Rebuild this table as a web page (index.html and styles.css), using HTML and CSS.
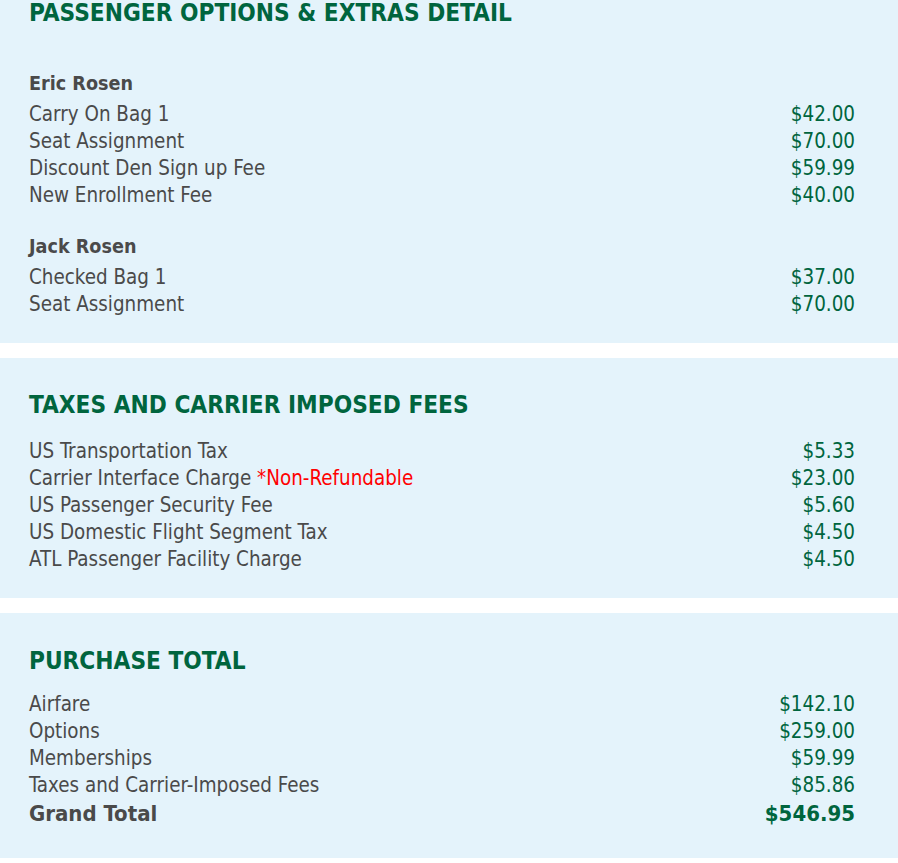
FILE: index.html
```html
<!DOCTYPE html>
<html>
<head>
<meta charset="utf-8">
<link rel="stylesheet" href="styles.css">
</head>
<body>
<section class="panel panel-first">
  <h2 class="title">PASSENGER OPTIONS &amp; EXTRAS DETAIL</h2>
  <div class="group group-first">
    <div class="name">Eric Rosen</div>
    <div class="row"><span>Carry On Bag 1</span><span class="amt">$42.00</span></div>
    <div class="row"><span>Seat Assignment</span><span class="amt">$70.00</span></div>
    <div class="row"><span>Discount Den Sign up Fee</span><span class="amt">$59.99</span></div>
    <div class="row"><span>New Enrollment Fee</span><span class="amt">$40.00</span></div>
  </div>
  <div class="group">
    <div class="name">Jack Rosen</div>
    <div class="row"><span>Checked Bag 1</span><span class="amt">$37.00</span></div>
    <div class="row"><span>Seat Assignment</span><span class="amt">$70.00</span></div>
  </div>
</section>
<section class="panel panel-taxes">
  <h2 class="title">TAXES AND CARRIER IMPOSED FEES</h2>
  <div class="rows">
    <div class="row"><span>US Transportation Tax</span><span class="amt">$5.33</span></div>
    <div class="row"><span>Carrier Interface Charge <span class="warn">*Non-Refundable</span></span><span class="amt">$23.00</span></div>
    <div class="row"><span>US Passenger Security Fee</span><span class="amt">$5.60</span></div>
    <div class="row"><span>US Domestic Flight Segment Tax</span><span class="amt">$4.50</span></div>
    <div class="row"><span>ATL Passenger Facility Charge</span><span class="amt">$4.50</span></div>
  </div>
</section>
<section class="panel panel-total">
  <h2 class="title">PURCHASE TOTAL</h2>
  <div class="rows">
    <div class="row"><span>Airfare</span><span class="amt">$142.10</span></div>
    <div class="row"><span>Options</span><span class="amt">$259.00</span></div>
    <div class="row"><span>Memberships</span><span class="amt">$59.99</span></div>
    <div class="row"><span>Taxes and Carrier-Imposed Fees</span><span class="amt">$85.86</span></div>
    <div class="row grand"><span>Grand Total</span><span class="amt">$546.95</span></div>
  </div>
</section>
</body>
</html>
```
FILE: styles.css
```css
html, body {
  margin: 0;
  padding: 0;
  background: #ffffff;
}
body {
  font-family: "DejaVu Sans Condensed", "DejaVu Sans", sans-serif;
  font-stretch: condensed;
  color: #4a4a4a;
  font-size: 20.4px;
}
.panel {
  background: #e4f3fb;
  padding: 32px 43px 25px 29px;
  margin-bottom: 15px;
}
.panel-first {
  padding-top: 0;
  padding-bottom: 25px;
}
.title {
  margin: 0;
  font-size: 24.2px;
  line-height: 30px;
  font-weight: 700;
  color: #00653e;
}
.panel-first .title {
  line-height: 26px;
}
.group {
  margin-top: 24px;
}
.group-first {
  margin-top: 44px;
}
.name {
  font-weight: 700;
  font-size: 19.6px;
  line-height: 27px;
  margin-bottom: 4px;
}
.row {
  display: flex;
  justify-content: space-between;
  line-height: 27px;
}
.amt {
  color: #00653e;
}
.warn {
  color: #ff0000;
}
.panel-taxes .rows {
  margin-top: 18px;
}
.panel-total {
  padding-top: 33px;
  padding-bottom: 30px;
}
.panel-total .rows {
  margin-top: 15px;
}
.row.grand {
  font-size: 22px;
  font-weight: 700;
  line-height: 29px;
}
```
